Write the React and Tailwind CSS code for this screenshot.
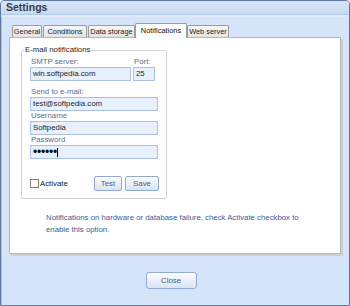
import React from 'react';

const tabs = [
  { label: 'General', cls: 'w-[30px]' },
  { label: 'Conditions', cls: 'w-[44px] ml-[1px]' },
  { label: 'Data storage', cls: 'w-[47px] ml-[1px]' },
  { label: 'Notifications', cls: 'w-[52px]', active: true },
  { label: 'Web server', cls: 'w-[42px]' },
];

function Field({ label, children, className = '' }) {
  return (
    <div className={`flex flex-col ${className}`}>
      <div className="h-[10px] leading-[10px] pl-px text-[#5b6e8e]">{label}</div>
      {children}
    </div>
  );
}

function Box({ children, className = '' }) {
  return (
    <div className={`h-[14px] border border-[#a9c0e0] bg-[#e8f0fb] px-[2px] flex items-center text-[#1f1f1f] ${className}`}>
      {children}
    </div>
  );
}

function Btn({ children, className = '' }) {
  return (
    <button className={`flex items-center justify-center border border-[#93aad0] rounded-[2px] bg-gradient-to-b from-[#fbfcff] to-[#d9e4f3] text-[#4a5b7c] ${className}`}>
      {children}
    </button>
  );
}

export default function App() {
  return (
    <div
      className="w-[350px] h-[306px] flex flex-col border border-[#62799f] rounded-t-[4px] bg-[#d5e4f8] text-[7.8px] overflow-hidden"
      style={{ fontFamily: '"Liberation Sans", Arial, sans-serif' }}
    >
      {/* title bar */}
      <div className="h-[14px] shrink-0 flex items-center pl-[5px] bg-gradient-to-b from-[#d6e4f7] to-[#c8daf2] border-b border-[#b3c8e6]">
        <span className="text-[10.5px] font-bold text-[#323c4a] leading-none">Settings</span>
      </div>

      <div className="flex-1 flex flex-col border-t-2 border-[#dfeaf9] px-[8px] pt-[6px] shadow-[inset_1px_0_0_#aac1e5]">
        {/* tabs */}
        <div className="flex items-end pl-[3px] text-[7.4px]">
          {tabs.map((t) =>
            t.active ? (
              <div
                key={t.label}
                className={`${t.cls} h-[15px] -mb-px relative z-10 bg-white border border-b-0 border-[#9c9c9c] rounded-t-[2px] flex items-center justify-center text-[#111]`}
              >
                {t.label}
              </div>
            ) : (
              <div
                key={t.label}
                className={`${t.cls} h-[12px] bg-gradient-to-b from-[#f7f7f7] to-[#e3e3e3] border border-b-0 border-[#9c9c9c] rounded-t-[2px] flex items-center justify-center text-[#222]`}
              >
                {t.label}
              </div>
            )
          )}
        </div>

        {/* panel */}
        <div className="h-[217px] bg-white border border-[#b6b6b6] shadow-[2px_2px_0_#cfcfcf] flex flex-col">
          <div className="relative mt-[12px] ml-[11px] w-[146px] border border-[#d3d3d3] rounded-[2px] px-[8px] pt-[6px] pb-[7px]">
            <div className="absolute left-[2px] top-[-6px] bg-white px-px leading-[10px] text-[#1e1e1e]">
              E-mail notifications
            </div>

            <div className="flex gap-[2px]">
              <Field label="SMTP server:" className="w-[101px]">
                <Box>win.softpedia.com</Box>
              </Field>
              <Field label="Port:" className="w-[22px]">
                <Box>25</Box>
              </Field>
            </div>

            <Field label="Send to e-mail:" className="mt-[6px]">
              <Box>test@softpedia.com</Box>
            </Field>
            <Field label="Username">
              <Box>Softpedia</Box>
            </Field>
            <Field label="Password">
              <Box>
                <span className="text-[12px] leading-none tracking-[-0.2px] text-[#111]">••••••</span>
                <span className="w-px h-[9px] bg-black" />
              </Box>
            </Field>

            <div className="mt-[17px] h-[15px] flex items-center">
              <span className="w-[9px] h-[9px] border border-[#7d7d7d] bg-white" />
              <span className="ml-px text-[#222]">Activate</span>
              <div className="ml-auto flex gap-[3px] mr-[-1px]">
                <Btn className="w-[28px] h-[15px]">Test</Btn>
                <Btn className="w-[34px] h-[15px]">Save</Btn>
              </div>
            </div>
          </div>

          <p className="mt-[13px] ml-[36px] leading-[12px] text-[#3b5a9b]">
            Notifications on hardware or database failure, check Activate checkbox to
            <br />
            enable this option.
          </p>
        </div>

        {/* footer */}
        <div className="flex justify-center pr-[8px] pt-[18px]">
          <Btn className="w-[51px] h-[17px] rounded-[3px] text-[#4c5b78]">Close</Btn>
        </div>
      </div>
    </div>
  );
}
